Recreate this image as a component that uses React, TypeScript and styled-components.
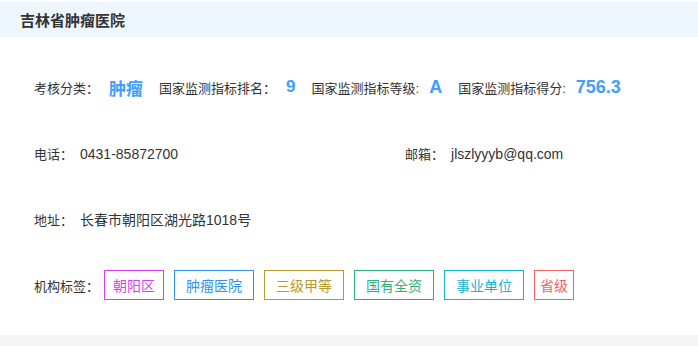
import React from 'react'
import styled, { createGlobalStyle } from 'styled-components'

const GlobalStyle = createGlobalStyle`
  html, body {
    margin: 0;
    padding: 0;
    background: #f5f5f5;
  }
  body {
    font-family: "Liberation Sans", "Noto Sans CJK SC", sans-serif;
    color: #333;
  }
`

const Card = styled.div`
  background: #fff;
  padding-top: 2px;
`

const Header = styled.div`
  height: 35px;
  background: #eef6fe;
  display: flex;
  align-items: center;
  padding-left: 20px;
  font-size: 15px;
  font-weight: bold;
  color: #333;
`

const Body = styled.div`
  padding: 17px 0 17px 34px;
`

const Row = styled.div`
  height: 66px;
  display: flex;
  align-items: center;
  font-size: 13px;
  color: #333;
`

const Cols = styled.div`
  display: grid;
  grid-template-columns: 371px 1fr;
  align-items: center;
  width: 100%;
`

const Label = styled.span`
  white-space: nowrap;
`

const Value = styled.span`
  margin-left: 7px;
  font-size: 14px;
  white-space: nowrap;
`

const Stat = styled.span<{ $size: number }>`
  color: #409eff;
  font-weight: bold;
  font-size: ${p => p.$size}px;
  margin: 0 16px 0 10px;
`

const Tags = styled.div`
  display: flex;
  gap: 10px;
  margin-left: 5px;
`

const Tag = styled.span<{ $color: string; $chars: number }>`
  width: ${p => p.$chars * 20}px;
  height: 30px;
  box-sizing: border-box;
  border: 1px solid ${p => p.$color};
  color: ${p => p.$color};
  font-size: 14px;
  display: flex;
  align-items: center;
  justify-content: center;
`

const tags = [
  { text: '朝阳区', color: '#d83ff0' },
  { text: '肿瘤医院', color: '#2f93e8' },
  { text: '三级甲等', color: '#b59b2a' },
  { text: '国有全资', color: '#2eb07d' },
  { text: '事业单位', color: '#17b4cf' },
  { text: '省级', color: '#f06262' },
]

const App = () => {
  return (
    <>
      <GlobalStyle />
      <Card>
        <Header>吉林省肿瘤医院</Header>
        <Body>
          <Row>
            <Label>考核分类：</Label>
            <Stat $size={17}>肿瘤</Stat>
            <Label>国家监测指标排名：</Label>
            <Stat $size={17}>9</Stat>
            <Label>国家监测指标等级:</Label>
            <Stat $size={18}>A</Stat>
            <Label>国家监测指标得分:</Label>
            <Stat $size={18}>756.3</Stat>
          </Row>
          <Row>
            <Cols>
              <div>
                <Label>电话：</Label>
                <Value>0431-85872700</Value>
              </div>
              <div>
                <Label>邮箱：</Label>
                <Value>jlszlyyyb@qq.com</Value>
              </div>
            </Cols>
          </Row>
          <Row>
            <Label>地址：</Label>
            <Value>长春市朝阳区湖光路1018号</Value>
          </Row>
          <Row>
            <Label>机构标签：</Label>
            <Tags>
              {tags.map((t, i) => (
                <Tag key={i} $color={t.color} $chars={t.text.length}>{t.text}</Tag>
              ))}
            </Tags>
          </Row>
        </Body>
      </Card>
    </>
  )
}

export default App
